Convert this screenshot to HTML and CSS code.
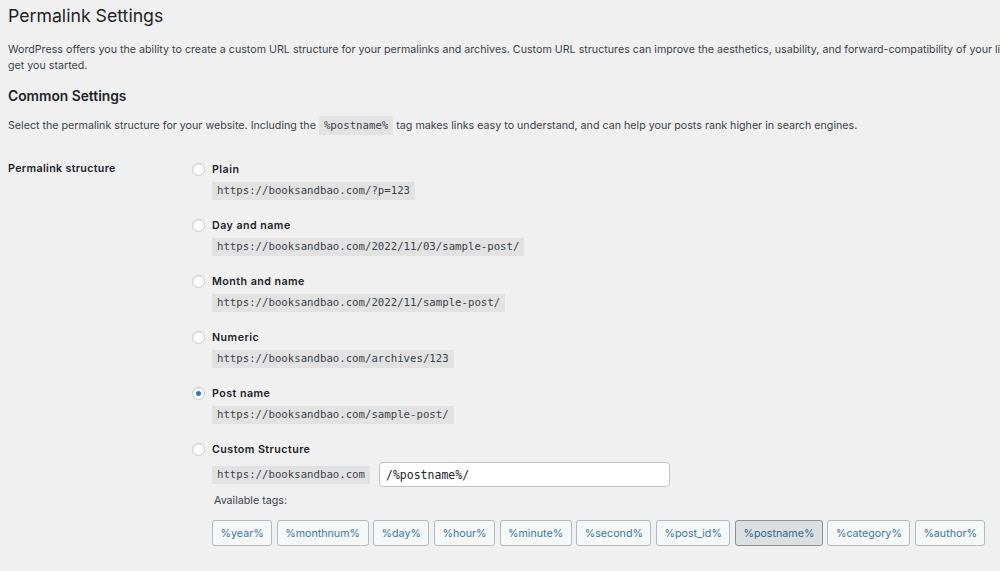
FILE: index.html
```html
<!DOCTYPE html>
<html lang="en">
<head>
<meta charset="utf-8">
<title>Permalink Settings</title>
<link rel="stylesheet" href="styles.css">
</head>
<body>
<div class="wrap">
  <h1 class="title">Permalink Settings</h1>
  <p class="intro">WordPress offers you the ability to create a custom URL structure for your permalinks and archives. Custom URL structures can improve the aesthetics, usability, and forward-compatibility of your links. A number of tags are available, and here are some examples to get you started.</p>
  <h2 class="section">Common Settings</h2>
  <p class="lead">Select the permalink structure for your website. Including the <code class="inline-code">%postname%</code> tag makes links easy to understand, and can help your posts rank higher in search engines.</p>

  <div class="form-row">
    <div class="row-label">Permalink structure</div>
    <div class="options">
      <div class="option">
        <label class="opt-label"><input type="radio" name="s" class="radio"><span>Plain</span></label>
        <div class="code-line"><code class="code">https://booksandbao.com/?p=123</code></div>
      </div>
      <div class="option">
        <label class="opt-label"><input type="radio" name="s" class="radio"><span>Day and name</span></label>
        <div class="code-line"><code class="code">https://booksandbao.com/2022/11/03/sample-post/</code></div>
      </div>
      <div class="option">
        <label class="opt-label"><input type="radio" name="s" class="radio"><span>Month and name</span></label>
        <div class="code-line"><code class="code">https://booksandbao.com/2022/11/sample-post/</code></div>
      </div>
      <div class="option">
        <label class="opt-label"><input type="radio" name="s" class="radio"><span>Numeric</span></label>
        <div class="code-line"><code class="code">https://booksandbao.com/archives/123</code></div>
      </div>
      <div class="option">
        <label class="opt-label"><input type="radio" name="s" class="radio" checked><span>Post name</span></label>
        <div class="code-line"><code class="code">https://booksandbao.com/sample-post/</code></div>
      </div>
      <div class="option option-custom">
        <label class="opt-label"><input type="radio" name="s" class="radio"><span>Custom Structure</span></label>
        <div class="custom-row">
          <code class="code">https://booksandbao.com</code>
          <input type="text" class="text-input" value="/%postname%/">
        </div>
        <div class="tags-title">Available tags:</div>
        <div class="tags">
          <button class="tag">%year%</button>
          <button class="tag">%monthnum%</button>
          <button class="tag">%day%</button>
          <button class="tag">%hour%</button>
          <button class="tag">%minute%</button>
          <button class="tag">%second%</button>
          <button class="tag">%post_id%</button>
          <button class="tag tag-active">%postname%</button>
          <button class="tag">%category%</button>
          <button class="tag">%author%</button>
        </div>
      </div>
    </div>
  </div>
</div>
</body>
</html>
```
FILE: styles.css
```css
html, body {
  margin: 0;
  padding: 0;
  background: #f0f0f1;
  overflow: hidden;
}
body {
  font-family: Inter, "Liberation Sans", sans-serif;
  font-size: 10.7px;
  color: #3c434a;
}
.wrap {
  width: 1360px;
  padding-left: 8px;
}
.title {
  margin: 0;
  padding-top: 4px;
  font-size: 17.7px;
  line-height: 24px;
  font-weight: 400;
  color: #1d2327;
}
.intro {
  width: 1343px;
  margin: 14px 0 0;
  line-height: 16px;
}
.section {
  margin: 12px 0 0;
  font-size: 13.8px;
  line-height: 20px;
  font-weight: 600;
  color: #1d2327;
}
.lead {
  margin: 11px 0 0;
  line-height: 18px;
}
.inline-code {
  font-family: "DejaVu Sans Mono", "Liberation Mono", monospace;
  font-size: 10.7px;
  background: #e2e2e3;
  padding: 3px 5px;
  color: #3c434a;
}
.form-row {
  display: flex;
  margin-top: 24px;
}
.row-label {
  width: 184px;
  flex: none;
  line-height: 20px;
  font-weight: 600;
  letter-spacing: 0.33px;
  color: #1d2327;
}
.options {
  display: flex;
  flex-direction: column;
}
.option {
  margin-bottom: 15px;
}
.opt-label {
  display: flex;
  align-items: center;
  height: 20px;
  font-weight: 600;
  letter-spacing: 0.45px;
  color: #1d2327;
}
.radio {
  appearance: none;
  -webkit-appearance: none;
  width: 13px;
  height: 13px;
  margin: 0 7px 0 0;
  border: 1px solid #c5c8cc;
  border-radius: 50%;
  background: #fff;
  box-shadow: inset 0 1px 1px rgba(0,0,0,0.06);
  box-sizing: border-box;
  display: grid;
  place-content: center;
}
.radio:checked::before {
  content: "";
  width: 5px;
  height: 5px;
  border-radius: 50%;
  background: #2e78b7;
}
.code-line {
  display: flex;
  margin-top: 3px;
  padding-left: 20px;
}
.code {
  font-family: "DejaVu Sans Mono", "Liberation Mono", monospace;
  font-size: 10.7px;
  line-height: 12px;
  padding: 3px 5px;
  background: #e2e2e3;
  color: #3c434a;
}
.custom-row {
  display: flex;
  align-items: center;
  gap: 9px;
  margin-top: 3px;
  padding-left: 20px;
}
.text-input {
  width: 291px;
  height: 25px;
  box-sizing: border-box;
  border: 1px solid #c3c4c7;
  border-radius: 4px;
  background: #fff;
  padding: 0 6px;
  font-family: "DejaVu Sans Mono", "Liberation Mono", monospace;
  font-size: 11.5px;
  color: #1d2327;
  outline: none;
}
.tags-title {
  margin-top: 6px;
  line-height: 16px;
  padding-left: 22px;
  color: #3c434a;
}
.tags {
  display: flex;
  gap: 4.5px;
  margin-top: 11px;
  padding-left: 20px;
}
.tag {
  height: 26px;
  padding: 0 7.5px;
  border: 1px solid #b0bac3;
  border-radius: 3px;
  background: #f6f7f7;
  color: #3a77a5;
  font-family: Inter, "Liberation Sans", sans-serif;
  font-size: 10.7px;
  cursor: pointer;
}
.tag-active {
  background: #dcdfe2;
  border-color: #8c9299;
  color: #2f6590;
}
```
